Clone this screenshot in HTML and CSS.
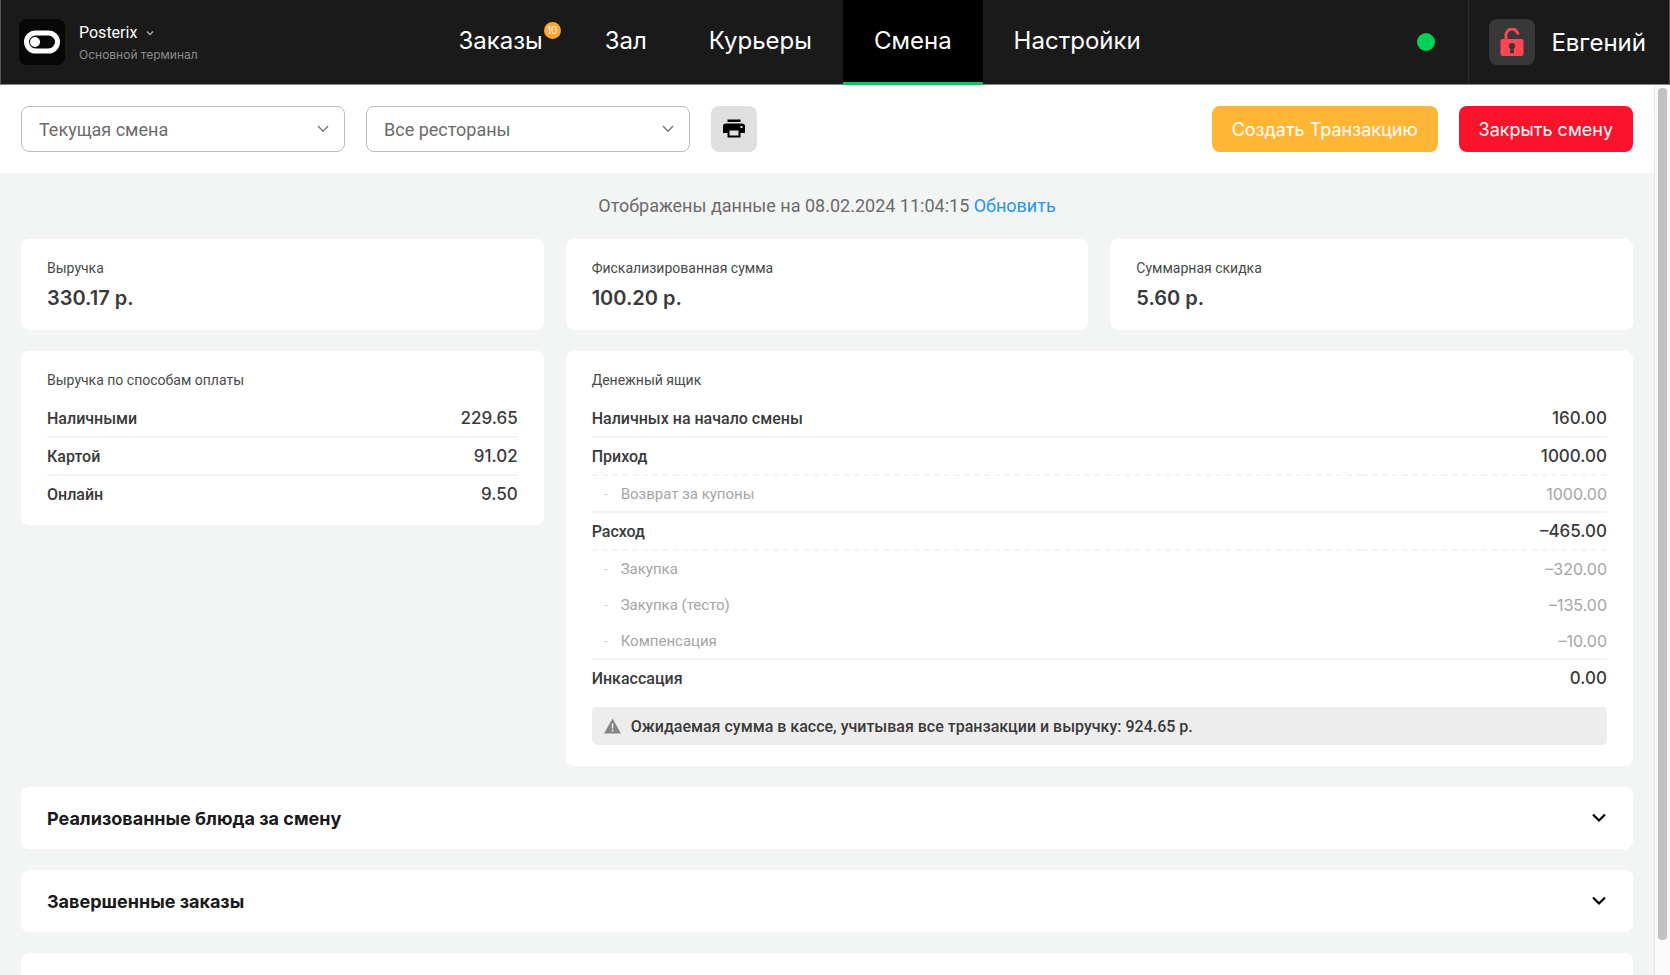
FILE: index.html
```html
<!DOCTYPE html>
<html lang="ru">
<head>
  <meta charset="UTF-8">
  <title>Posterix – Смена</title>
  <link rel="stylesheet" href="styles.css">
</head>
<body>

<header class="header">
  <div class="brand">
    <svg class="logo" viewBox="0 0 46 46" aria-hidden="true">
      <rect width="46" height="46" rx="8" fill="#070707"/>
      <rect x="7.5" y="14" width="31" height="18" rx="9" fill="none" stroke="#fff" stroke-width="5"/>
      <circle cx="16" cy="23" r="5" fill="#fff"/>
    </svg>
    <div class="brand-text">
      <button class="brand-name">Posterix
        <svg width="8" height="6" viewBox="0 0 8 6" aria-hidden="true"><path d="M1 1.5l3 3 3-3" fill="none" stroke="#aaa" stroke-width="1.3"/></svg>
      </button>
      <div class="terminal">Основной терминал</div>
    </div>
  </div>

  <nav class="nav">
    <a href="#">Заказы<span class="badge">10</span></a>
    <a href="#">Зал</a>
    <a href="#">Курьеры</a>
    <a href="#" class="active">Смена</a>
    <a href="#">Настройки</a>
  </nav>

  <div class="status">
    <span class="dot"></span>
    <div class="user">
      <button class="lock" aria-label="Заблокировать">
        <svg width="24" height="28" viewBox="0 0 24 28" aria-hidden="true">
          <path d="M6 12V7.500a6 6 0 0 1 12-0.800" fill="none" stroke="#ff4453" stroke-width="3"/>
          <rect x="0.5" y="11" width="23" height="17" rx="2" fill="#ff4453"/>
          <circle cx="12" cy="18" r="3" fill="#383838"/>
          <path d="M10.500 19h3l0.500 6h-4z" fill="#383838"/>
        </svg>
      </button>
      <span class="user-name">Евгений</span>
    </div>
  </div>
</header>

<div class="page">
  <div class="content">
    <div class="toolbar">
      <label class="select">
        <select aria-label="Смена"><option>Текущая смена</option></select>
        <svg width="12" height="8" viewBox="0 0 12 8" aria-hidden="true"><path d="M1 1l5 5.2L11 1" fill="none" stroke="#777" stroke-width="1.4"/></svg>
      </label>
      <label class="select">
        <select aria-label="Ресторан"><option>Все рестораны</option></select>
        <svg width="12" height="8" viewBox="0 0 12 8" aria-hidden="true"><path d="M1 1l5 5.2L11 1" fill="none" stroke="#777" stroke-width="1.4"/></svg>
      </label>
      <button class="btn btn-print" aria-label="Печать">
        <svg width="22" height="20" viewBox="0 0 22 20" aria-hidden="true">
          <path d="M4.5 0.5h13v2.5h-13z"/>
          <path fill-rule="evenodd" d="M3 4.5h16a3 3 0 0 1 3 3V14h-4.5v4.5h-13V14H0V7.500a3 3 0 0 1 3-3zM6.500 11.500v5h9v-5zM17.500 7v2h2V7z"/>
        </svg>
      </button>
      <div class="actions">
        <button class="btn btn-create">Создать Транзакцию</button>
        <button class="btn btn-close">Закрыть смену</button>
      </div>
    </div>

    <main class="main">
      <p class="updated">Отображены данные на 08.02.2024 11:04:15 <a href="#">Обновить</a></p>

      <div class="grid">
        <section class="card">
          <h2>Выручка</h2>
          <div class="value">330.17 р.</div>
        </section>
        <section class="card">
          <h2>Фискализированная сумма</h2>
          <div class="value">100.20 р.</div>
        </section>
        <section class="card">
          <h2>Суммарная скидка</h2>
          <div class="value">5.60 р.</div>
        </section>

        <section class="card">
          <h2>Выручка по способам оплаты</h2>
          <table>
            <tr><th scope="row">Наличными</th><td>229.65</td></tr>
            <tr><th scope="row">Картой</th><td>91.02</td></tr>
            <tr><th scope="row">Онлайн</th><td>9.50</td></tr>
          </table>
        </section>

        <section class="card card-wide">
          <h2>Денежный ящик</h2>
          <table>
            <tr><th scope="row">Наличных на начало смены</th><td>160.00</td></tr>
            <tr class="group"><th scope="row">Приход</th><td>1000.00</td></tr>
            <tr class="sub sub-last"><th scope="row">Возврат за купоны</th><td>1000.00</td></tr>
            <tr class="group"><th scope="row">Расход</th><td>–465.00</td></tr>
            <tr class="sub"><th scope="row">Закупка</th><td>–320.00</td></tr>
            <tr class="sub"><th scope="row">Закупка (тесто)</th><td>–135.00</td></tr>
            <tr class="sub sub-last"><th scope="row">Компенсация</th><td>–10.00</td></tr>
            <tr><th scope="row">Инкассация</th><td>0.00</td></tr>
          </table>
          <div class="notice">
            <svg width="17" height="16" viewBox="0 0 17 16" aria-hidden="true">
              <path d="M8.500 0.500L17 15.500H0z" fill="#858585"/>
              <path d="M7.800 5.500h1.500v5H7.800zM7.800 11.800h1.500v1.700H7.800z" fill="#eee"/>
            </svg>
            Ожидаемая сумма в кассе, учитывая все транзакции и выручку: 924.65 р.
          </div>
        </section>
      </div>

      <button class="accordion">Реализованные блюда за смену
        <svg width="16" height="10" viewBox="0 0 16 10" aria-hidden="true"><path d="M2 1.500l6 6 6-6" fill="none" stroke="#000" stroke-width="2.200"/></svg>
      </button>
      <button class="accordion">Завершенные заказы
        <svg width="16" height="10" viewBox="0 0 16 10" aria-hidden="true"><path d="M2 1.500l6 6 6-6" fill="none" stroke="#000" stroke-width="2.200"/></svg>
      </button>
      <button class="accordion" aria-label="Ещё"></button>
    </main>
  </div>
  <div class="scrollbar"><div class="thumb"></div></div>
</div>

</body>
</html>
```
FILE: styles.css
```css
* {
  box-sizing: border-box;
}
body {
  margin: 0;
  height: 100vh;
  display: flex;
  flex-direction: column;
  overflow: hidden;
  font-family: Inter, "Liberation Sans", sans-serif;
  color: #3a3a3a;
  background: #fff;
}
button, select {
  font-family: inherit;
  cursor: pointer;
}
a {
  text-decoration: none;
}

/* header */
.header {
  display: flex;
  justify-content: space-between;
  flex: none;
  height: 85px;
  background: #1a1a1a;
  border: 1px solid;
  border-width: 0 1px 1px;
  border-color: #555 #555 #868686;
  color: #fff;
}
.brand {
  display: flex;
  align-items: center;
  gap: 14px;
  padding-left: 18px;
}
.brand-text {
  padding-top: 2px;
}
.logo {
  width: 46px;
  height: 46px;
}
.brand-name {
  display: flex;
  align-items: center;
  gap: 9px;
  padding: 0;
  border: none;
  background: none;
  color: #fff;
  font-family: Roboto, sans-serif;
  font-size: 16px;
  line-height: 24px;
}
.terminal {
  font-size: 12px;
  line-height: 20px;
  color: #8a8a8a;
}
.nav {
  display: flex;
  margin-bottom: -1px;
}
.nav a {
  position: relative;
  padding: 0 31px;
  border-bottom: 3px solid transparent;
  color: #fff;
  font-size: 24px;
  line-height: 81px;
}
.nav .active {
  background: #000;
  border-bottom-color: #19bf61;
}
.badge {
  position: absolute;
  top: 22px;
  right: 13px;
  width: 17px;
  height: 17px;
  border-radius: 50%;
  background: #ffa62e;
  font-size: 10px;
  line-height: 17px;
  text-align: center;
}
.status {
  display: flex;
  align-items: center;
}
.dot {
  width: 18px;
  height: 18px;
  margin: 0 33px 0 16px;
  border-radius: 50%;
  background: #00d158;
}
.user {
  display: flex;
  align-items: center;
  gap: 16px;
  height: 100%;
  padding: 0 23px 0 20px;
  border-left: 1px solid #2c2c2c;
  font-size: 24px;
}
.lock {
  display: flex;
  align-items: center;
  justify-content: center;
  width: 46px;
  height: 46px;
  border: none;
  border-radius: 8px;
  background: #383838;
}

/* scrolling area */
.page {
  display: flex;
  flex: 1;
  min-height: 0;
}
.content {
  flex: 1;
  overflow: hidden;
  background: #f3f5f5;
}
.scrollbar {
  width: 16px;
  padding: 3px 3px 0 3px;
  border-left: 1px solid #e8e8e8;
  background: #fafafa;
}
.thumb {
  height: 96%;
  border-radius: 4px;
  background: #c1c1c1;
}

/* toolbar */
.toolbar {
  display: flex;
  gap: 21px;
  padding: 21px;
  background: #fff;
}
.select {
  position: relative;
  width: 324px;
}
.select select {
  appearance: none;
  width: 100%;
  height: 46px;
  padding: 0 17px;
  border: 1px solid #bbb;
  border-radius: 8px;
  background: #fff;
  color: #6b6b6b;
  font-family: Roboto, sans-serif;
  font-size: 18px;
}
.select svg {
  position: absolute;
  top: 19px;
  right: 16px;
  pointer-events: none;
}
.btn {
  height: 46px;
  padding: 0 20px;
  border: none;
  border-radius: 8px;
  color: #fff;
  font-size: 18px;
}
.btn-print {
  display: flex;
  align-items: center;
  padding: 0 12px;
  background: #e0e0e0;
}
.actions {
  display: flex;
  gap: 21px;
  margin-left: auto;
}
.btn-create {
  background: #ffb636;
}
.btn-close {
  background: #fb132c;
}

/* report */
.main {
  padding: 21px;
}
.updated {
  margin: 0 0 21px;
  text-align: center;
  font-family: Roboto, sans-serif;
  font-size: 18px;
  line-height: 24px;
  color: #6b6b6b;
}
.updated a {
  color: #2196f3;
}
.grid {
  display: grid;
  grid-template-columns: repeat(3, 1fr);
  gap: 21px 22px;
  align-items: start;
}
.card {
  padding: 19px 26px 13px;
  border-radius: 8px;
  background: #fff;
}
.card-wide {
  grid-column: span 2;
  padding-bottom: 21px;
}
.card h2 {
  margin: 0;
  font-family: Roboto, sans-serif;
  font-size: 14px;
  font-weight: 400;
  line-height: 20px;
  color: #4a4a4a;
}
.value {
  padding: 6px 0 5px;
  font-size: 20px;
  font-weight: 600;
  line-height: 28px;
}
.card table {
  width: 100%;
  margin-top: 10px;
  border-spacing: 0;
}
.card th, .card td {
  height: 38px;
  padding: 0;
  border-bottom: 2px solid #f3f4f4;
  font-weight: 500;
}
.card th {
  font-family: Roboto, sans-serif;
  font-size: 16px;
  text-align: left;
}
.card td {
  font-size: 17px;
  text-align: right;
}
.card .group th, .card .group td {
  border-bottom-style: dashed;
}
.card .sub th, .card .sub td {
  height: 36px;
  border-bottom: none;
  color: #a5a5a5;
  font-weight: 400;
}
.card .sub th {
  font-size: 15px;
}
.card .sub td {
  font-size: 16px;
}
.card .sub-last th, .card .sub-last td {
  height: 37px;
  border-bottom: 2px solid #f3f4f4;
}
.sub th::before {
  content: "-";
  display: inline-block;
  width: 17px;
  padding-left: 12px;
  color: #d5d5d5;
}
.card tr:last-child th, .card tr:last-child td {
  height: 36px;
  border-bottom: none;
}
.notice {
  display: flex;
  align-items: center;
  gap: 10px;
  height: 38px;
  margin-top: 11px;
  padding: 0 12px;
  border-radius: 5px;
  background: #ededed;
  font-family: Roboto, sans-serif;
  font-size: 16px;
  font-weight: 500;
}
.accordion {
  display: flex;
  align-items: center;
  justify-content: space-between;
  width: 100%;
  height: 62px;
  margin-top: 21px;
  padding: 0 26px;
  border: none;
  border-radius: 8px;
  background: #fff;
  color: #1a1a1a;
  font-size: 18px;
  font-weight: 700;
}
```
